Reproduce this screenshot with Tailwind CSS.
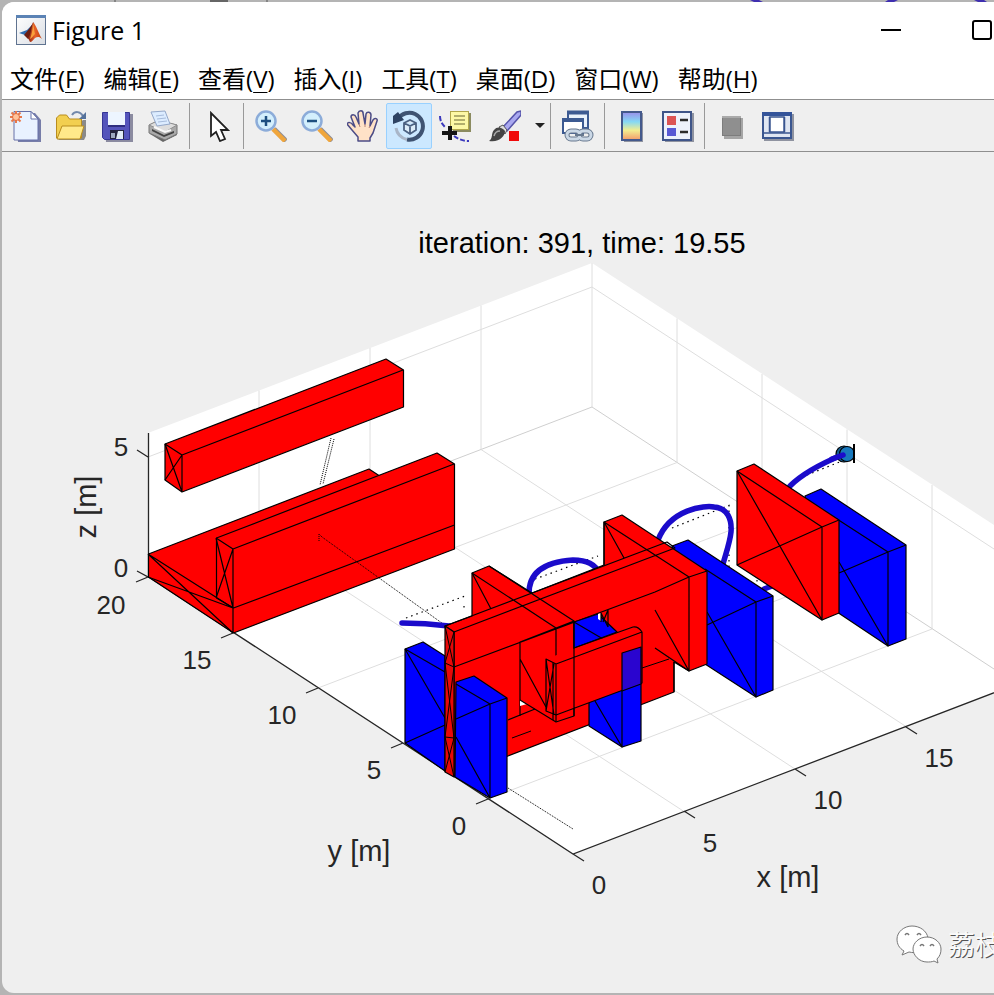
<!DOCTYPE html>
<html lang="zh-CN">
<head>
    <meta charset="UTF-8">
    <meta name="viewport" content="width=device-width, initial-scale=1.0">
    <title>Figure 1</title>
    <script src="https://cdn.jsdelivr.net/npm/@tailwindcss/browser@4"></script>
</head>
<body class="min-h-screen bg-[#b4b4b4] pl-[2px] pb-[2px] flex flex-col overflow-x-hidden font-['Open_Sans','Noto_Sans_CJK_SC',sans-serif] text-black">
    <!-- 窗口后面露出的背景 -->
    <svg class="w-full h-[2px] shrink-0" viewBox="2 0 992 2" preserveAspectRatio="none" aria-hidden="true">
        <path d="M115 0v2M267 0v2" stroke="#555"/>
        <path d="M210 0h18v2h-18z" fill="#666"/>
        <path d="M750 0h9l4 2h-9zM888 0h10l-4 2h-9zM974 0h10l3 2h-9z" fill="#3f2fb0"/>
    </svg>
    <div class="flex-1 flex flex-col bg-[#efefef] rounded-l-xl overflow-hidden">

        <!-- 标题栏 -->
        <header class="flex items-center h-14 pl-[13px] bg-white overflow-hidden">
            <svg class="size-8 shrink-0" viewBox="0 0 32 32">
                <defs>
                    <linearGradient id="logoBg" x1="0" y1="0" x2="1" y2="1"><stop offset="0" stop-color="#fff"/><stop offset="1" stop-color="#d9dde3"/></linearGradient>
                    <linearGradient id="flame" x1="0" y1="0" x2="1" y2="0"><stop offset="0" stop-color="#8c2412"/><stop offset=".5" stop-color="#e8622a"/><stop offset="1" stop-color="#c2400e"/></linearGradient>
                </defs>
                <rect x="1.5" y="1.5" width="29" height="29" fill="url(#logoBg)" stroke="#5f7390"/>
                <rect x="1" y="1" width="30" height="3" fill="#5b83b5"/>
                <path d="M4 19l8-3 4-4 3-4-2 9-4 7-3-3z" fill="#2f6db0"/>
                <path d="M9 21l4 4 3-2 2-14-4 6z" fill="#6b1d12"/>
                <path d="M18 8c3 3 5 10 9 17-3-3-5-2-7-1-2 2-3 4-5 4l-2-4c3-3 3-9 5-16z" fill="url(#flame)"/>
                <path d="M18 9c0 5-1 10-3 16 2-1 4-4 5-5z" fill="#f9a03c"/>
            </svg>
            <h1 class="ml-[5px] text-[25px] leading-8">Figure 1</h1>
            <div class="ml-auto -mr-[33px] flex shrink-0">
                <button class="w-[91px] h-14 flex items-center justify-center" aria-label="最小化"><span class="w-5 h-[2px] bg-black"></span></button>
                <button class="w-[91px] h-14 flex items-center justify-center" aria-label="最大化"><span class="size-5 border-2 border-black rounded-[3px]"></span></button>
            </div>
        </header>

        <!-- 菜单 -->
        <nav class="flex items-center gap-[19px] h-[42px] pl-2 bg-white border-b border-[#8f8f8f] text-[24px] leading-8 whitespace-nowrap">
            <button>文件(<u class="decoration-1 underline-offset-4">F</u>)</button>
            <button>编辑(<u class="decoration-1 underline-offset-4">E</u>)</button>
            <button>查看(<u class="decoration-1 underline-offset-4">V</u>)</button>
            <button>插入(<u class="decoration-1 underline-offset-4">I</u>)</button>
            <button>工具(<u class="decoration-1 underline-offset-4">T</u>)</button>
            <button>桌面(<u class="decoration-1 underline-offset-4">D</u>)</button>
            <button>窗口(<u class="decoration-1 underline-offset-4">W</u>)</button>
            <button>帮助(<u class="decoration-1 underline-offset-4">H</u>)</button>
        </nav>

        <!-- 工具栏 -->
        <div class="flex items-center h-[52px] border-b border-[#8f8f8f]" role="toolbar">
            <button class="w-[46px] h-[46px] grid place-items-center" aria-label="新建图窗">
                <svg class="size-8" viewBox="0 0 32 32">
                    <path d="M7 3h19l6 7v22H9z" fill="#777da8"/>
                    <path d="M5 1.500h17l7 7V30H5z" fill="#e9f2ff" stroke="#6670a8"/>
                    <path d="M22 1.500V9h7z" fill="#fff" stroke="#6670a8"/>
                    <path d="M7 1v12M1 7h12M2.500 2.500l9 9M11.500 2.500l-9 9" stroke="#e8794c" stroke-width="2"/>
                    <circle cx="7" cy="7" r="3.500" fill="#ffc39a" stroke="#e2683a"/>
                </svg>
            </button>
            <button class="w-[46px] h-[46px] grid place-items-center" aria-label="打开文件">
                <svg class="size-8" viewBox="0 0 32 32">
                    <path d="M3 30h26l2-4V10h-3z" fill="#8a8a8a"/>
                    <path d="M1.500 28V8l3-3h7l3 4h12v19z" fill="#f2cf50" stroke="#b98d1e"/>
                    <path d="M2 29l5-13h22l-4 13z" fill="#ffe98a" stroke="#b98d1e"/>
                    <path d="M17 5c3-4 8-4 11 1" fill="none" stroke="#7288ab" stroke-width="2"/>
                    <path d="M31 2v7h-7z" fill="#56729b"/>
                </svg>
            </button>
            <button class="w-[46px] h-[46px] grid place-items-center" aria-label="保存图窗">
                <svg class="size-8" viewBox="0 0 32 32">
                    <path d="M3 4h29v28H5z" fill="#8b8ba0"/>
                    <path d="M1.500 2.500h27v27h-25l-2-2z" fill="#5454bb" stroke="#353594"/>
                    <rect x="7" y="2" width="17" height="14" fill="#edf5ff"/>
                    <path d="M7 16h17" stroke="#2e2e80" stroke-width="2"/>
                    <rect x="9" y="20" width="14" height="9" fill="#25253e"/>
                    <path d="M17 21h5v8h-7z" fill="#e1ecf5"/>
                    <rect x="10" y="23" width="4" height="5" fill="#9faac0"/>
                </svg>
            </button>
            <button class="w-[46px] h-[46px] grid place-items-center" aria-label="打印图窗">
                <svg class="size-8" viewBox="0 0 32 32">
                    <path d="M3 24l13 8 14-7v-7z" fill="#676767"/>
                    <path d="M2 15l9-4 19 4v9l-12 6-16-7z" fill="#aaa" stroke="#777"/>
                    <path d="M2 15l10-5 18 5-12 7z" fill="#ddd" stroke="#8e8e8e"/>
                    <path d="M4 2l14-1 5 13-13 2z" fill="#dcecff" stroke="#94a8c9"/>
                    <path d="M9 6l8-1M10 9l9-1M11 12l9-1" stroke="#a7bcdc"/>
                    <path d="M5 19l12 6 10-4v2l-10 4-12-6z" fill="#444"/>
                    <path d="M7 17l11 5 6-2" fill="none" stroke="#f9f9f9" stroke-width="2"/>
                </svg>
            </button>
            <span class="ml-[3px] mr-1 w-px h-[46px] bg-[#999]"></span>
            <button class="w-[46px] h-[46px] grid place-items-center" aria-label="编辑绘图">
                <svg class="size-8" viewBox="0 0 32 32">
                    <path d="M10 3v23l5-4 4 9 5-2-4-9h7z" fill="#fff" stroke="#202020" stroke-width="1.800"/>
                </svg>
            </button>
            <span class="ml-[3px] mr-1 w-px h-[46px] bg-[#999]"></span>
            <button class="w-[46px] h-[46px] grid place-items-center" aria-label="放大">
                <svg class="size-8" viewBox="0 0 32 32">
                    <path d="M19 19l12 12" stroke="#8c8c96" stroke-width="5"/>
                    <path d="M18 19l12 12" stroke="#f0a63c" stroke-width="4.500"/>
                    <circle cx="11" cy="11" r="9.500" fill="#d3effd" stroke="#8cacd9" stroke-width="2.500"/>
                    <path d="M11 6v10M6 11h10" stroke="#1d4f80" stroke-width="2.500"/>
                </svg>
            </button>
            <button class="w-[46px] h-[46px] grid place-items-center" aria-label="缩小">
                <svg class="size-8" viewBox="0 0 32 32">
                    <path d="M19 19l12 12" stroke="#8c8c96" stroke-width="5"/>
                    <path d="M18 19l12 12" stroke="#f0a63c" stroke-width="4.500"/>
                    <circle cx="11" cy="11" r="9.500" fill="#d3effd" stroke="#8cacd9" stroke-width="2.500"/>
                    <path d="M6 11h10" stroke="#1d4f80" stroke-width="2.500"/>
                </svg>
            </button>
            <button class="w-[46px] h-[46px] grid place-items-center" aria-label="平移">
                <svg class="size-8" viewBox="0 0 32 32">
                    <path d="M11 31v-4L5 20 0 14c1-2 4-2 6 1l2 2-4-10c0-3 4-3 5 0l3 7-1-11c1-3 5-3 5 0l2 11 1-10c1-3 5-2 5 1l-1 11 3-6c2-3 5-1 4 1l-4 12-3 5v3z" fill="#ffe2c7" stroke="#4c4c86" stroke-width="1.500" stroke-linejoin="round"/>
                    <path d="M12 14l1 3M18 14v3M23 16l-1 2" stroke="#b47f75"/>
                </svg>
            </button>
            <button class="w-[46px] h-[46px] grid place-items-center bg-[#cce8ff] border border-[#99d1ff] rounded-[2px]" aria-label="三维旋转" aria-pressed="true">
                <svg class="size-8" viewBox="0 0 32 32">
                    <path d="M5 9A13.500 13.500 0 1 1 14 29.500" fill="none" stroke="#3f5372" stroke-width="4"/>
                    <path d="M14 29.500C8 28 4 24 3 18" fill="none" stroke="#a9b6c8" stroke-width="3"/>
                    <path d="M0 14V6l5-4 6 8z" fill="#2e4363"/>
                    <path d="M11 13l6-3 6 3v7l-6 4-6-4zM11 13l6 3 6-3M17 16v8" fill="#dcecf8" stroke="#4b6080" stroke-width="1.800"/>
                </svg>
            </button>
            <button class="w-[46px] h-[46px] grid place-items-center" aria-label="数据游标">
                <svg class="size-8" viewBox="0 0 32 32">
                    <path d="M13 3h19v19H14z" fill="#8b8b60"/>
                    <rect x="11.500" y="1.500" width="18" height="18" fill="#fdf8a5" stroke="#b1a64b"/>
                    <path d="M15 6h11M15 10h11M15 14h11" stroke="#99955a" stroke-width="1.500"/>
                    <path d="M1 6c0 5 2 8 5 11M15 26c4 3 9 5 15 5" fill="none" stroke="#3b39bd" stroke-width="2" stroke-dasharray="5 2"/>
                    <path d="M11 16v14M3 23h15" stroke="#151515" stroke-width="4"/>
                </svg>
            </button>
            <button class="w-[54px] h-[46px] grid place-items-center" aria-label="刷亮">
                <svg class="size-8" viewBox="0 0 32 32">
                    <path d="M14 17L28 2l4-1v4L18 21z" fill="#a9a8f0" stroke="#5654aa" stroke-width="1.500"/>
                    <path d="M10 17l4-2 4 5-2 4z" fill="#ddd" stroke="#555"/>
                    <path d="M0 31c4-2 2-8 5-11 3-4 8-3 11 1 0 5-6 12-16 10z" fill="#444"/>
                    <path d="M5 26c1-4 3-5 6-5" fill="none" stroke="#aaa" stroke-width="1.500"/>
                    <rect x="20" y="21" width="10" height="10" fill="#f00a0a"/>
                </svg>
            </button>
            <button class="w-[15px] h-[46px] grid place-items-center" aria-label="刷亮选项">
                <svg class="w-[10px] h-[5px]" viewBox="0 0 10 5"><path d="M0 0h10L5 5z" fill="#222"/></svg>
            </button>
            <span class="ml-[3px] mr-1 w-px h-[46px] bg-[#999]"></span>
            <button class="w-[46px] h-[46px] grid place-items-center" aria-label="链接绘图">
                <svg class="size-8" viewBox="0 0 32 32">
                    <rect x="6" y="2" width="20" height="16" fill="#e9f1fb" stroke="#3c5a92" stroke-width="2"/>
                    <path d="M5 2.500h22" stroke="#3c5a92" stroke-width="4"/>
                    <rect x="1" y="9" width="20" height="14" fill="#fff" stroke="#3c5a92" stroke-width="2"/>
                    <path d="M0 10h22" stroke="#3c5a92" stroke-width="4"/>
                    <rect x="5" y="21" width="13" height="8" rx="4" fill="none" stroke="#68798f" stroke-width="5"/>
                    <rect x="17" y="21" width="12" height="8" rx="4" fill="none" stroke="#68798f" stroke-width="5"/>
                    <rect x="5" y="21" width="13" height="8" rx="4" fill="none" stroke="#cbd8e6" stroke-width="3"/>
                    <rect x="17" y="21" width="12" height="8" rx="4" fill="none" stroke="#cbd8e6" stroke-width="3"/>
                    <path d="M13 25h9" stroke="#68798f" stroke-width="2"/>
                </svg>
            </button>
            <span class="ml-[3px] mr-1 w-px h-[46px] bg-[#999]"></span>
            <button class="w-[46px] h-[46px] grid place-items-center" aria-label="插入颜色栏">
                <svg class="size-8" viewBox="0 0 32 32">
                    <defs><linearGradient id="bar" x1="0" y1="0" x2="0" y2="1"><stop offset="0" stop-color="#9a8eea"/><stop offset=".35" stop-color="#85d9f5"/><stop offset=".65" stop-color="#f2ee91"/><stop offset="1" stop-color="#f39a6a"/></linearGradient></defs>
                    <path d="M8 3h19v29H8z" fill="#8f93a0"/>
                    <rect x="6" y="2" width="19" height="28" fill="url(#bar)" stroke="#44598c" stroke-width="2"/>
                </svg>
            </button>
            <button class="w-[46px] h-[46px] grid place-items-center" aria-label="插入图例">
                <svg class="size-8" viewBox="0 0 32 32">
                    <path d="M3 3h29v29H3z" fill="#8f93a0"/>
                    <rect x="1" y="2" width="28" height="28" fill="#eef2fb" stroke="#3f5589" stroke-width="2"/>
                    <rect x="5" y="6" width="9" height="9" fill="#dc5454"/>
                    <rect x="5" y="18" width="9" height="8" fill="#5959d4"/>
                    <path d="M18 10h8M18 22h8" stroke="#2c2c2c" stroke-width="2.500"/>
                </svg>
            </button>
            <span class="ml-[3px] mr-1 w-px h-[46px] bg-[#999]"></span>
            <button class="w-[46px] h-[46px] grid place-items-center" aria-label="隐藏绘图工具">
                <svg class="size-8" viewBox="0 0 32 32">
                    <path d="M8 8h19v21H8z" fill="#a5a5a5"/>
                    <rect x="6.500" y="6.500" width="18" height="19" fill="#8f8f8f" stroke="#7d7d7d"/>
                    <path d="M6 7h19" stroke="#aaa" stroke-width="2"/>
                </svg>
            </button>
            <button class="w-[46px] h-[46px] grid place-items-center" aria-label="显示绘图工具">
                <svg class="size-8" viewBox="0 0 32 32">
                    <path d="M2 4h30v27H2z" fill="#8f93a0"/>
                    <rect x="1" y="3" width="28" height="25" fill="#dfe6f2" stroke="#3a5690" stroke-width="2"/>
                    <path d="M0 4h30" stroke="#34549a" stroke-width="4"/>
                    <path d="M1 23h28M7.500 7v15M22.500 7v15" stroke="#3a5690" stroke-width="1.500"/>
                    <rect x="8" y="7" width="14" height="15" fill="#fff" stroke="#3a5690" stroke-width="1.500"/>
                </svg>
            </button>
        </div>

        <!-- 三维坐标区 -->
        <main>
            <svg class="w-full h-auto block" viewBox="2 152 992 841" font-family="'Liberation Sans', Arial, sans-serif" font-size="26" fill="#262626">
                <!-- 坐标区背景 -->
                <path d="M148 577V433L592 263L1017 540V684L573 854z" fill="#fff"/>
                <g fill="none" stroke="#dedede">
                    <path d="M259 534.500V390.500M370 492V348M481 449.500V305.500M592 407V263M677 462.500V318.500M762 518V374M847 573.500V429.500M932 629V485"/>
                    <path d="M148 457L592 287L1017 564"/>
                    <path d="M148 577L592 407L1017 684" stroke="#cfcfcf"/>
                    <path d="M233 632.500L677 462.500M318 688L762 518M403 743.500L847 573.500M488 799L932 629"/>
                    <path d="M684 811.500L259 534.500M795 769L370 492M906 726.500L481 449.500"/>
                </g>
                <!-- 坐标轴与刻度 -->
                <path d="M148.500 433V577L573 854L1017 684M137 450l11 7M137 571l11 6l-12 5M233 633l-12 5M318 688l-12 5M403 743l-12 5M488 799l-12 5M573 854l11 7M684 811l11 7M795 769l11 7M906 727l11 7" fill="none" stroke="#262626" stroke-width="1.300"/>

                <g stroke="#000" stroke-width="1.200" stroke-linejoin="round">
                    <!-- 左侧障碍物 -->
                    <g fill="#f00">
                        <path d="M165 444L386 359L403.500 370V407L182 492L165 480z"/>
                        <path d="M148.500 554L369 469L454.500 525V549L233.500 633L148.500 577z"/>
                        <path d="M216.500 538L437 453L454.500 464V525L233.500 608L216.500 598z"/>
                    </g>
                    <path d="M165 444L182 455L403 370M182 455V492M165 444L182 492M182 455L165 480M148 554L233 608V633M148 577L233 608M148 554L233 633M216 538L233 549L454 464M233 549V608M216 538L233 608M233 549L216 598" fill="none"/>
                    <path d="M331 438L320 485M334 439L323 484M319 541V534L322 537L446 626" fill="none" stroke-width="1" stroke-dasharray="1 1"/>

                    <!-- 后段轨迹 -->
                    <g fill="none" stroke-dasharray="1.500 4">
                        <path d="M406 618L465 596M535 579L598 556M672 528L730 505M807 475L842 461M464 606v2M729 505V570M757 580v2"/>
                    </g>
                    <g fill="none" stroke="#1b0bcb" stroke-width="5.500" stroke-linecap="round">
                        <path d="M402 623Q425 623 449 626"/>
                        <path d="M529 595C528 566 556 561 573 560C587 560 595 564 600 574"/>
                        <path d="M658 540C670 509 705 505 714 507C728 508 732 520 731 532C730 542 726 553 723 564"/>
                        <path d="M764 589L772 586"/>
                    </g>

                    <!-- 远端方块 -->
                    <path d="M805 496L821 489L906 545V639L888 646L837 612z" fill="#00f"/>
                    <path d="M837 519L888 552L906 545M888 552V646L839 562M839 573L888 552" fill="none"/>
                    <path d="M790 486Q806 470 842 455" fill="none" stroke="#1b0bcb" stroke-width="5.500" stroke-linecap="round"/>
                    <path d="M737 471L754 464L839 520V613L822 620L737 565z" fill="#f00"/>
                    <path d="M737 471L822 527L839 520M822 527V620L737 471M737 565L822 527" fill="none"/>

                    <!-- 第二道门 -->
                    <path d="M672 546L688 540L773 596V690L756 697L705 664z" fill="#00f"/>
                    <path d="M705 569L756 602L773 596M756 602V697L707 612M707 625L756 602" fill="none"/>

                    <!-- 长墙 -->
                    <path d="M472 573L489 566L532 593L604 565V522L622 515L707 571V664L689 671L674 662V692L508 756L454 776V632L445 626L472 616z" fill="#f00"/>
                    <path d="M445 626L667 542L675 548L454 632M604 565V522L689 577L707 571M604 522L624 558M689 577V671L655 610M655 648L689 671M655 592L689 577M655 592L454 667M472 573L556 628L574 621L489 566M472 573L491 609M674 662V692M508 720L535 709M520 716V642L556 628V722M520 659L546 707" fill="none"/>
                    <path d="M642 668L669 659M512 738L531 731" fill="none" stroke-width="1"/>
                    <path d="M520 700V706L527 704z" fill="#fff" stroke="none"/>
                    <path d="M520 700L556 722L574 716V621" fill="none"/>

                    <!-- 门洞 -->
                    <path d="M574 622L598 614L617 632L574 648z" fill="#00f"/>
                    <path d="M574 622L603 639" fill="none"/>
                    <path d="M598 614L601 613V621L598 619z" fill="#fff" stroke="none"/>
                    <path d="M601 613V622M608 610V627M601 613L608 627M608 610L603 622" fill="none"/>

                    <!-- 前方短墙 -->
                    <path d="M589 702L622 688V653L641 647V741L622 747L589 726z" fill="#00f"/>
                    <path d="M546 659L633 627Q638 626 642 632V683L556 715L546 711z" fill="#f00" stroke="none"/>
                    <path d="M574 648L633 627Q638 626 642 632V683L556 715L546 711V659L556 664L642 632M556 664V715M546 659L554 715M554 664L546 711M553 663V720M574 621V716" fill="none"/>
                    <path d="M622 653L641 647V684L622 691z" fill="#2a05cf"/>
                    <path d="M622 691V747L595 701" fill="none"/>

                    <!-- 近端方块 -->
                    <path d="M405 649L423 642L445 656V771L405 743z" fill="#00f"/>
                    <path d="M405 649L445 672M405 649L445 718M405 743L445 725" fill="none"/>
                    <path d="M456 682L474 676L507 698V792L490 798L455 777z" fill="#00f"/>
                    <path d="M456 684L490 704L507 698M490 704V798L456 737M456 719L490 704" fill="none"/>
                    <path d="M445 626L454 632V777L445 772z" fill="#e80808"/>
                    <path d="M445 626L454 667L445 663L454 632M445 663L454 738L445 737L454 667M445 737L454 777M445 772L454 738" fill="none" stroke-width="1"/>
                    <path d="M508 788L573 829" fill="none" stroke-width="1" stroke-dasharray="1 1"/>

                    <!-- 无人机 -->
                    <circle cx="844" cy="454" r="8" fill="#145f95"/>
                    <circle cx="847" cy="454" r="7.500" fill="#1878bd"/>
                    <path d="M832 459L843 455" fill="none" stroke="#1b0bcb" stroke-width="5.500" stroke-linecap="round"/>
                    <path d="M854 444V463" stroke-width="2"/>
                </g>

                <!-- 标题与刻度标签 -->
                <text x="582" y="253" text-anchor="middle" font-size="29" fill="#000">iteration: 391, time: 19.55</text>
                <g text-anchor="middle">
                    <text x="121" y="456">5</text>
                    <text x="121" y="577">0</text>
                    <text x="111" y="614">20</text>
                    <text x="197" y="669">15</text>
                    <text x="282" y="724">10</text>
                    <text x="374" y="779">5</text>
                    <text x="459" y="835">0</text>
                    <text x="599" y="894">0</text>
                    <text x="710" y="852">5</text>
                    <text x="828" y="809">10</text>
                    <text x="939" y="767">15</text>
                    <text x="359" y="861" font-size="29">y [m]</text>
                    <text x="788" y="887" font-size="29">x [m]</text>
                    <text transform="translate(96 507) rotate(-90)" font-size="29">z [m]</text>
                </g>

                <!-- 公众号水印 -->
                <g fill="#fff" stroke="#777" stroke-width="1">
                    <path d="M912 926c-8 0-15 6-15 13 0 5 2 9 7 12l-2 4 7-3c15 3 20-4 19-14-1-7-8-12-16-12z"/>
                    <path d="M927 937c-8 0-14 6-14 12s6 13 14 13c2 0 5 0 7-1l4 2-1-4c3-3 4-6 4-10 0-6-6-12-14-12z"/>
                    <path d="M905 935q2-3 4 0M917 935q2-3 4 0M920 946q2-3 4 0M930 946q2-3 4 0" fill="none" stroke-width="1.500"/>
                </g>
                <g font-family="'Noto Sans CJK SC', sans-serif" font-size="27">
                    <text x="949" y="956" fill="#555">荔枝</text>
                    <text x="948" y="955" fill="#fafafa">荔枝</text>
                </g>
            </svg>
        </main>
    </div>
</body>
</html>
